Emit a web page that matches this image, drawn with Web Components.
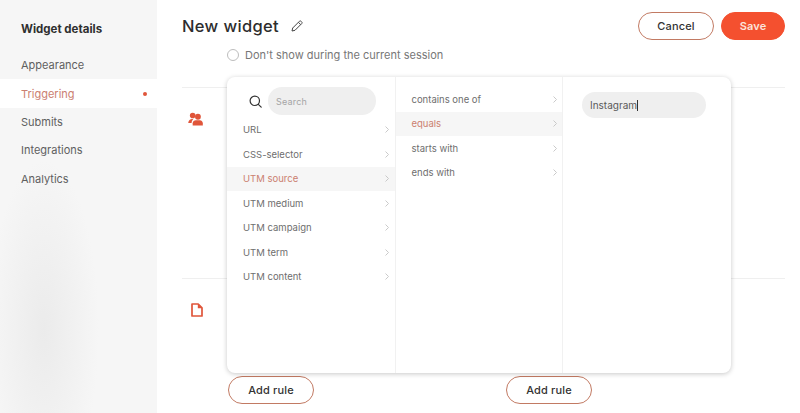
<!DOCTYPE html>
<html>
<head>
<meta charset="utf-8">
<title>New widget</title>
<style>
  html, body { margin: 0; height: 100%; overflow: hidden; background: #fff; }
  body { display: flex; font-family: Inter, "Open Sans", sans-serif; color: #333; }
</style>
</head>
<body>
<widget-sidebar>
  <span slot="title">Widget details</span>
  <nav-item>Appearance</nav-item>
  <nav-item active>Triggering</nav-item>
  <nav-item>Submits</nav-item>
  <nav-item>Integrations</nav-item>
  <nav-item>Analytics</nav-item>
</widget-sidebar>

<widget-main>
  <page-header slot="header">New widget</page-header>
  <radio-row slot="header">Don't show during the current session</radio-row>

  <rule-section style="height: 191px">
    <svg slot="icon" width="15" height="14" viewBox="0 0 16 14" fill="#e0553a">
      <circle cx="5" cy="3.2" r="3"/>
      <circle cx="10.6" cy="4.6" r="3.1"/>
      <path d="M0.2 11.2C0.6 8.4 2.2 7 4.6 7L5.6 7.2C4.6 8.2 4 9.4 3.8 11.2Z"/>
      <path d="M5 13.8V11.6C5 9.4 6.6 8.2 8.4 8.2H12.6C14.6 8.2 15.8 9.6 15.8 11.6V13.8Z"/>
    </svg>
  </rule-section>

  <rule-section last>
    <svg slot="icon" width="12" height="14" viewBox="0 0 12 14" style="margin-left: 2.5px">
      <path d="M1 1H7.2L11 4.8V13H1Z" fill="none" stroke="#e0553a" stroke-width="1.7" stroke-linejoin="round"/>
      <path d="M6.8 1V5.2H11Z" fill="#e0553a"/>
    </svg>
    <div slot="actions"><pill-button>Add rule</pill-button><pill-button style="margin-left: 192px">Add rule</pill-button></div>
  </rule-section>

  <rule-popup slot="popup">
    <menu-column slot="first" search>
      <menu-item>URL</menu-item>
      <menu-item>CSS-selector</menu-item>
      <menu-item active>UTM source</menu-item>
      <menu-item>UTM medium</menu-item>
      <menu-item>UTM campaign</menu-item>
      <menu-item>UTM term</menu-item>
      <menu-item>UTM content</menu-item>
    </menu-column>
    <menu-column slot="second">
      <menu-item>contains one of</menu-item>
      <menu-item active>equals</menu-item>
      <menu-item>starts with</menu-item>
      <menu-item>ends with</menu-item>
    </menu-column>
    <value-box slot="third">Instagram</value-box>
  </rule-popup>
</widget-main>

<script>
class WidgetSidebar extends HTMLElement {
  constructor() {
    super();
    this.attachShadow({ mode: "open" }).innerHTML = `
      <style>
        :host {
          display: block;
          flex: 0 0 157px;
          box-sizing: border-box;
          padding-top: 21px;
          background:
            radial-gradient(ellipse 55px 170px at 44px 330px, #ebebeb, rgba(235,235,235,0) 100%),
            #f6f6f6;
        }
        .title { font-size: 11.5px; font-weight: 700; color: #2f2f2f; line-height: 16px; padding-left: 21px; }
        .items { margin-top: 14px; }
      </style>
      <div class="title"><slot name="title"></slot></div>
      <div class="items"><slot></slot></div>`;
  }
}
customElements.define("widget-sidebar", WidgetSidebar);

class NavItem extends HTMLElement {
  constructor() {
    super();
    this.attachShadow({ mode: "open" }).innerHTML = `
      <style>
        :host {
          display: flex;
          align-items: center;
          justify-content: space-between;
          height: 28.4px;
          padding: 0 10px 0 21px;
          font-size: 11px;
          color: #5f5f5f;
        }
        :host([active]) { background: #fff; color: #cb8070; }
        .dot { display: none; width: 4px; height: 4px; border-radius: 50%; background: #e0553a; }
        :host([active]) .dot { display: block; }
      </style>
      <slot></slot><span class="dot"></span>`;
  }
}
customElements.define("nav-item", NavItem);

class WidgetMain extends HTMLElement {
  constructor() {
    super();
    this.attachShadow({ mode: "open" }).innerHTML = `
      <style>
        :host {
          display: block;
          flex: 1;
          position: relative;
          box-sizing: border-box;
          padding: 0 15px 0 25px;
          min-width: 0;
        }
        .popup { position: absolute; left: 70px; top: 77px; }
      </style>
      <slot name="header"></slot>
      <slot></slot>
      <div class="popup"><slot name="popup"></slot></div>`;
  }
}
customElements.define("widget-main", WidgetMain);

class PageHeader extends HTMLElement {
  constructor() {
    super();
    this.attachShadow({ mode: "open" }).innerHTML = `
      <style>
        :host { display: flex; align-items: center; height: 28px; padding-top: 12px; }
        h1 { margin: 0; font-size: 16.5px; font-weight: 500; color: #2d2d2d; letter-spacing: .35px; }
        svg { margin-left: 12px; }
        .actions { margin-left: auto; display: flex; gap: 7px; }
      </style>
      <h1><slot></slot></h1>
      <svg width="12" height="12" viewBox="0 0 12 12" fill="none" stroke="#444" stroke-width="1" stroke-linejoin="round">
        <path d="M1 11L1.7 8L8.4 1.3C8.9 .8 9.6 .8 10.1 1.3L10.7 1.9C11.2 2.4 11.2 3.1 10.7 3.6L4 10.3Z"/>
        <path d="M7.4 2.3L9.7 4.6"/>
      </svg>
      <div class="actions">
        <pill-button wide>Cancel</pill-button>
        <pill-button primary>Save</pill-button>
      </div>`;
  }
}
customElements.define("page-header", PageHeader);

class PillButton extends HTMLElement {
  constructor() {
    super();
    this.attachShadow({ mode: "open" }).innerHTML = `
      <style>
        :host {
          display: inline-flex;
          align-items: center;
          justify-content: center;
          box-sizing: border-box;
          width: 86px;
          height: 28px;
          border: 1.3px solid #c27a63;
          border-radius: 14px;
          background: #fff;
          font-size: 11px;
          font-weight: 500;
          color: #333;
          letter-spacing: .15px;
        }
        :host([wide]) { width: 76px; }
        :host([primary]) { width: 64px; background: #f4502f; border-color: #f4502f; color: #fbe3dc; font-weight: 600; }
      </style>
      <slot></slot>`;
  }
}
customElements.define("pill-button", PillButton);

class RadioRow extends HTMLElement {
  constructor() {
    super();
    this.attachShadow({ mode: "open" }).innerHTML = `
      <style>
        :host {
          display: flex;
          align-items: center;
          height: 47px;
          box-sizing: border-box;
          padding: 0 0 17px 45px;
          font-size: 11px;
          color: #777;
        }
        .ring { width: 12px; height: 12px; box-sizing: border-box; border: 1px solid #bdbdbd; border-radius: 50%; margin-right: 6px; }
      </style>
      <span class="ring"></span><slot></slot>`;
  }
}
customElements.define("radio-row", RadioRow);

class RuleSection extends HTMLElement {
  constructor() {
    super();
    this.attachShadow({ mode: "open" }).innerHTML = `
      <style>
        :host {
          display: block;
          box-sizing: border-box;
          border-top: 1px solid #efefef;
          padding: 24px 0 0 6px;
        }
        .icon { height: 14px; }
        .actions { margin: 59px 0 0 40px; }
        ::slotted(svg) { display: block; }
      </style>
      <div class="icon"><slot name="icon"></slot></div>
      <div class="actions"><slot name="actions"></slot></div>`;
  }
}
customElements.define("rule-section", RuleSection);

class RulePopup extends HTMLElement {
  constructor() {
    super();
    this.attachShadow({ mode: "open" }).innerHTML = `
      <style>
        :host {
          display: flex;
          width: 504px;
          height: 296px;
          background: #fff;
          border-radius: 8px;
          box-shadow: 0 1px 5px rgba(0,0,0,.22);
        }
        .col { box-sizing: border-box; border-right: 1px solid #f1f1f1; }
        .a { width: 168.5px; }
        .b { width: 167.5px; }
        .c { flex: 1; border-right: 0; }
      </style>
      <div class="col a"><slot name="first"></slot></div>
      <div class="col b"><slot name="second"></slot></div>
      <div class="col c"><slot name="third"></slot></div>`;
  }
}
customElements.define("rule-popup", RulePopup);

class MenuColumn extends HTMLElement {
  constructor() {
    super();
    this.attachShadow({ mode: "open" }).innerHTML = `
      <style>
        :host { display: block; padding-top: 10px; }
        .search { display: none; align-items: center; height: 28px; padding-left: 22px; margin-bottom: 2.5px; }
        :host([search]) .search { display: flex; }
        .field {
          width: 108px; height: 28px; margin-left: 6px; box-sizing: border-box; padding-left: 8px;
          border-radius: 14px; background: #efefef; display: flex; align-items: center;
          font-size: 9px; color: #a5a5a5; letter-spacing: .2px;
        }
      </style>
      <div class="search">
        <svg width="13" height="13" viewBox="0 0 13 13" fill="none" stroke="#333" stroke-width="1.2" stroke-linecap="round">
          <circle cx="5.8" cy="5.8" r="4.7"/><path d="M9.3 9.3L12.2 12.2"/>
        </svg>
        <span class="field">Search</span>
      </div>
      <slot></slot>`;
  }
}
customElements.define("menu-column", MenuColumn);

class MenuItem extends HTMLElement {
  constructor() {
    super();
    this.attachShadow({ mode: "open" }).innerHTML = `
      <style>
        :host {
          display: flex;
          align-items: center;
          justify-content: space-between;
          height: 24.5px;
          padding: 0 5.5px 0 16px;
          font-size: 9.5px;
          color: #6e6e6e;
        }
        :host([active]) { background: #f6f6f6; color: #cb8070; }
        svg { flex: none; }
      </style>
      <slot></slot>
      <svg width="4" height="7" viewBox="0 0 4 7" fill="none" stroke="#c4c4c4" stroke-width=".9"><path d="M.5 .5L3.5 3.5L.5 6.5"/></svg>`;
  }
}
customElements.define("menu-item", MenuItem);

class ValueBox extends HTMLElement {
  constructor() {
    super();
    this.attachShadow({ mode: "open" }).innerHTML = `
      <style>
        :host { display: block; padding: 15px 0 0 19px; }
        .field {
          width: 124px; height: 26px; box-sizing: border-box; padding-left: 8px;
          border-radius: 13px; background: #efefef; display: flex; align-items: center;
          font-size: 10px; color: #5a5a5a;
        }
        .caret { width: 1px; height: 11px; background: #333; }
      </style>
      <div class="field"><slot></slot><span class="caret"></span></div>`;
  }
}
customElements.define("value-box", ValueBox);
</script>
</body>
</html>
